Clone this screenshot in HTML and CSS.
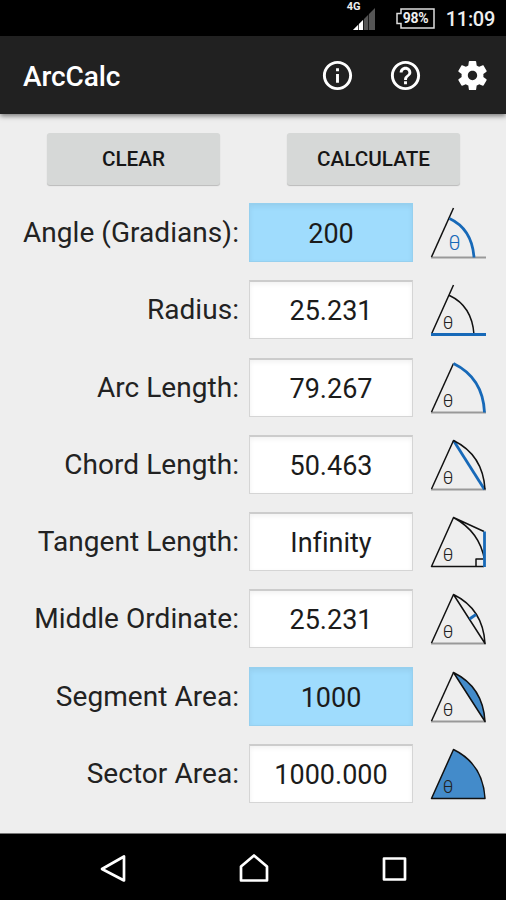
FILE: index.html
```html
<!DOCTYPE html>
<html lang="en">
<head>
<meta charset="utf-8">
<title>ArcCalc</title>
<link rel="stylesheet" href="styles.css">
</head>
<body>
<div class="screen">
  <div class="status">
    <div class="signal">
      <span class="network">4G</span>
      <svg width="22" height="23" viewBox="0 0 22 23"><path d="M0 23 22 1V23Z" fill="#555"/><path d="M0 23 10 13V23Z" fill="#fff"/><path d="M5.500 10V23M10.500 8V23M15.500 4V23" stroke="#000" stroke-width=".7"/></svg>
    </div>
    <div class="battery">
      <svg width="39" height="21" viewBox="0 0 39 21"><path d="M5 1H38V20H5V15.500H1V5.500H5Z" fill="none" stroke="#ddd" stroke-width="1.500"/></svg>
      <span class="percent">98%</span>
    </div>
    <span class="clock">11:09</span>
  </div>
  <header class="appbar">
    <h1>ArcCalc</h1>
    <svg class="action" viewBox="0 0 24 24"><path d="M11 17h2v-6h-2v6zm1-15C6.480 2 2 6.480 2 12s4.480 10 10 10 10-4.480 10-10S17.520 2 12 2zm0 18c-4.410 0-8-3.590-8-8s3.590-8 8-8 8 3.590 8 8-3.590 8-8 8zM11 9h2V7h-2v2z"/></svg>
    <svg class="action" viewBox="0 0 24 24"><path d="M11 18h2v-2h-2v2zm1-16C6.480 2 2 6.480 2 12s4.480 10 10 10 10-4.480 10-10S17.520 2 12 2zm0 18c-4.410 0-8-3.590-8-8s3.590-8 8-8 8 3.590 8 8-3.590 8-8 8zm0-14c-2.210 0-4 1.790-4 4h2c0-1.100.9-2 2-2s2 .9 2 2c0 2-3 1.750-3 5h2c0-2.250 3-2.500 3-5 0-2.210-1.790-4-4-4z"/></svg>
    <svg class="action" viewBox="0 0 24 24"><path d="M19.430 12.980c.04-.32.07-.64.07-.98s-.03-.66-.07-.98l2.110-1.650c.19-.15.24-.42.12-.64l-2-3.460c-.12-.22-.39-.3-.61-.22l-2.490 1c-.52-.4-1.080-.73-1.690-.98l-.38-2.650C14.460 2.180 14.250 2 14 2h-4c-.25 0-.46.18-.49.42l-.38 2.650c-.61.25-1.170.59-1.690.98l-2.490-1c-.23-.09-.49 0-.61.22l-2 3.460c-.13.22-.07.49.12.64l2.110 1.650c-.04.32-.07.65-.07.98s.03.66.07.98l-2.110 1.650c-.19.15-.24.42-.12.64l2 3.460c.12.22.39.3.61.22l2.490-1c.52.4 1.080.73 1.690.98l.38 2.650c.03.24.24.42.49.42h4c.25 0 .46-.18.49-.42l.38-2.650c.61-.25 1.170-.59 1.690-.98l2.490 1c.23.09.49 0 .61-.22l2-3.460c.12-.22.07-.49-.12-.64l-2.110-1.650zM12 15.200c-1.770 0-3.200-1.430-3.200-3.200s1.430-3.200 3.200-3.200 3.200 1.430 3.200 3.200-1.430 3.200-3.200 3.200z"/></svg>
  </header>
  <main class="content">
    <div class="buttons"><button>CLEAR</button><button>CALCULATE</button></div>
    <div class="rows">
      <div class="row"><label>Angle (Gradians):</label><div class="field given">200</div>
        <svg class="diagram" viewBox="0 0 60 59"><path class="base" d="M3 54.500H58"/><path class="line" d="M3.500 54 25.500 5"/><path class="blue" d="M21.500 15.500Q44 26 46 54.500"/><text class="theta big" x="26.500" y="47">θ</text></svg></div>
      <div class="row"><label>Radius:</label><div class="field">25.231</div>
        <svg class="diagram" viewBox="0 0 60 59"><path class="line" d="M3.500 54 25.500 5M21.500 15.500Q44 26 46 54.500"/><path class="blue" d="M3 54.500H58"/><text class="theta" x="20" y="49">θ</text></svg></div>
      <div class="row"><label>Arc Length:</label><div class="field">79.267</div>
        <svg class="diagram" viewBox="0 0 60 59"><path class="base" d="M3 54.500H58"/><path class="line" d="M3.500 54 25.500 5.500"/><path class="blue" d="M25.500 5.500Q55 20 56.500 54.500"/><text class="theta" x="20" y="49">θ</text></svg></div>
      <div class="row"><label>Chord Length:</label><div class="field">50.463</div>
        <svg class="diagram" viewBox="0 0 60 59"><path class="base" d="M3 54.500H58"/><path class="blue" d="M25.500 5.500 56.500 54.500"/><path class="line" d="M3.500 54 25.500 5.500Q55 20 57 54.500"/><text class="theta" x="20" y="49">θ</text></svg></div>
      <div class="row"><label>Tangent Length:</label><div class="field">Infinity</div>
        <svg class="diagram" viewBox="0 0 60 59"><path class="line" d="M56 54.500H3.500L25.500 5.500 56 19.500M25.500 5.500Q52 20 56.500 48M48 54V47H55"/><path class="blue" d="M56.500 19.500V55"/><text class="theta" x="20" y="49">θ</text></svg></div>
      <div class="row"><label>Middle Ordinate:</label><div class="field">25.231</div>
        <svg class="diagram" viewBox="0 0 60 59"><path class="base" d="M3 54.500H58"/><path class="line" d="M3.500 54 25.500 5.500Q55 20 57 54.500L25.500 5.500"/><path class="blue" d="M41.500 30 48 25.500"/><text class="theta" x="20" y="49">θ</text></svg></div>
      <div class="row"><label>Segment Area:</label><div class="field given">1000</div>
        <svg class="diagram" viewBox="0 0 60 59"><path class="base" d="M3 54.500H58"/><path class="line" d="M3.500 54 25.500 5.500"/><path class="line area" d="M25.500 5.500Q55 20 57 54.500Z"/><text class="theta" x="20" y="49">θ</text></svg></div>
      <div class="row"><label>Sector Area:</label><div class="field">1000.000</div>
        <svg class="diagram" viewBox="0 0 60 59"><path class="line area" d="M3.500 54.500 25.500 5.500Q55 20 57 54.500Z"/><text class="theta" x="20" y="49">θ</text></svg></div>
    </div>
  </main>
  <nav class="navbar">
    <svg viewBox="0 0 30 30"><path d="M4 15 26 2.500V26.500Z"/></svg>
    <svg viewBox="0 0 30 30"><path d="M2 26.500V12.500L15 1.500 28 12.500V26.500Z"/></svg>
    <svg viewBox="0 0 30 30"><path d="M4 4.500H25V25.500H4Z"/></svg>
  </nav>
</div>
</body>
</html>
```
FILE: styles.css
```css
* { box-sizing: border-box; }
body { margin: 0; font-family: Roboto, sans-serif; background: #000; }
.screen { width: 506px; height: 900px; display: flex; flex-direction: column; background: #eee; overflow: hidden; }
.status { height: 36px; flex: none; background: #000; color: #eee; display: flex; justify-content: flex-end; align-items: center; padding-right: 11px; }
.signal { position: relative; width: 22px; height: 23px; margin: 0 21px 0 0; }
.signal svg, .battery svg { display: block; }
.network { position: absolute; left: -6px; top: -5px; font-size: 11px; line-height: 10px; font-weight: 700; }
.battery { position: relative; width: 39px; height: 21px; margin-right: 11px; }
.percent { position: absolute; left: 7px; top: 0; line-height: 21px; font-size: 14px; font-weight: 700; letter-spacing: -.3px; }
.clock { font-size: 20px; font-weight: 500; line-height: 36px; padding-top: 2px; letter-spacing: -.3px; }
.appbar { height: 78px; flex: none; background: #212121; display: flex; align-items: center; padding: 0 16px 0 23px; color: #fff; position: relative; box-shadow: 0 2px 5px rgba(0,0,0,.5); }
h1 { margin: 2px auto 0 0; font-size: 28px; font-weight: 500; letter-spacing: -.1px; }
.action { width: 35px; height: 35px; fill: #fff; margin-left: 32.5px; }
.content { flex: 1; }
.buttons { display: flex; gap: 67px; padding: 19px 46px 0 47px; }
button { width: 173px; height: 52px; flex: none; border: 0; border-radius: 3px; padding: 0; background: #d6d8d7; color: #161616; font: 500 20.700px Roboto, sans-serif; box-shadow: 0 1px 1px rgba(0,0,0,.22); }
.rows { padding-top: 18px; }
.row { height: 59px; margin-bottom: 18.3px; display: grid; grid-template-columns: 239px 164px 60px; column-gap: 10px; align-items: center; }
label { text-align: right; font-size: 28px; font-weight: 400; color: #222; white-space: nowrap; letter-spacing: .05px; }
.field { height: 59px; line-height: 59px; text-align: center; font-size: 27px; color: #1b1b1b; background: #fff; border: 1px solid #d5d5d5; border-top: 2px solid #ccc; box-shadow: inset 0 2px 5px rgba(0,0,0,.06); font-variant-ligatures: none; }
.given { background: #9fdcfd; border-color: #96d0ef; }
.diagram { width: 60px; height: 59px; margin-left: 4.5px; }
.diagram path { fill: none; }
.diagram .line { stroke: #111; stroke-width: 1.5; stroke-linejoin: round; }
.diagram .base { stroke: #999; stroke-width: 2; }
.diagram .blue { stroke: #1769b8; stroke-width: 2.8; }
.diagram .area { fill: #438bca; }
.theta { font: 300 18.500px Roboto, sans-serif; text-anchor: middle; fill: #222; }
.theta.big { font-size: 21px; fill: #1769b8; }
.navbar { height: 67px; flex: none; background: #000; border-top: 1px solid #777; display: flex; justify-content: space-between; padding: 20px 96px 0 98px; }
.navbar svg { width: 30px; height: 30px; fill: none; stroke: #fff; stroke-width: 2.7; stroke-linejoin: round; }
```
